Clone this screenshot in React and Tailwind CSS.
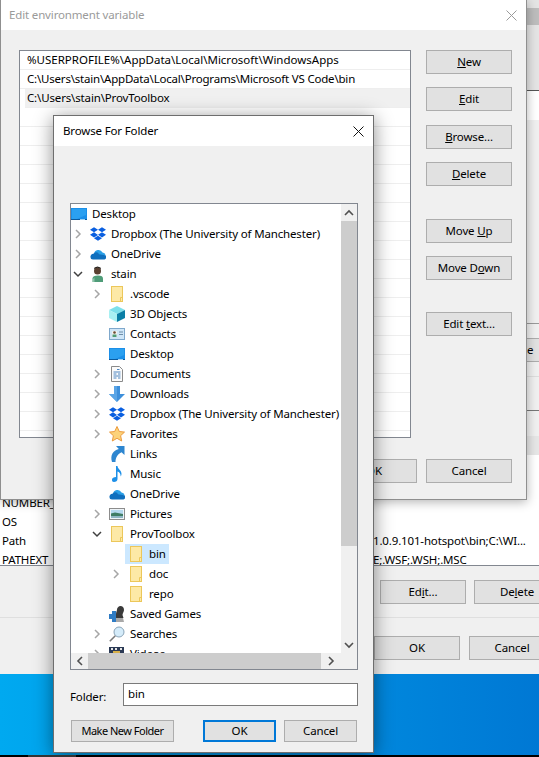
import { FaDropbox } from 'react-icons/fa';

const FolderIcon = () => (
  <svg width="16" height="16" viewBox="0 0 16 16">
    <rect x="2.5" y="0.5" width="11" height="15" fill="#fde9a6" stroke="#ecc75a" />
    <path d="M11.5 15v-3.500h2" fill="none" stroke="#ecc75a" />
  </svg>
);

const DesktopIcon = () => (
  <svg width="16" height="16" viewBox="0 0 16 16">
    <rect x="0" y="2" width="16" height="12" fill="#1b8fe8" />
    <path d="M1 3h14v6L6 13H1z" fill="#2ba0f0" />
    <rect x="0" y="13" width="16" height="1" fill="#0b5a9e" />
    <rect x="9" y="13" width="5" height="1" fill="#9fd3f5" />
  </svg>
);

const DropboxIcon = () => <FaDropbox size={16} color="#0a5fe0" />;

const CloudIcon = () => (
  <svg width="16" height="16" viewBox="0 0 16 16">
    <path d="M4 8a4.500 4.500 0 0 1 8.500-1.500A3 3 0 0 1 15.500 9L6 9z" fill="#2b9fe6" />
    <path d="M0.500 11a2.800 2.800 0 0 1 3-3.200 3 3 0 0 1 5.500 0.500l6.500 1a2.500 2.500 0 0 1-1 4.200H3a2.500 2.500 0 0 1-2.500-2.500z" fill="#0f6fbe" />
  </svg>
);

const UserIcon = () => (
  <svg width="16" height="16" viewBox="0 0 16 16">
    <path d="M2.500 16v-3.500c0-2 2-3 5.500-3s5 1 5 3V16z" fill="#4f9c78" />
    <path d="M3 16v-3l1.500-1.500V16z" fill="#8cc4a8" />
    <circle cx="7.500" cy="5" r="3.500" fill="#5a4030" />
    <path d="M4 3.500Q7.500 0 11 3.500L10.500 1.500 7.500 0.500 4.500 1.500z" fill="#26211c" />
  </svg>
);

const CubeIcon = () => (
  <svg width="16" height="16" viewBox="0 0 16 16">
    <path d="M0 4l8-4 8 4-8 4z" fill="#7de0ea" />
    <path d="M0 4l8 4v8l-8-4z" fill="#a8f0f2" />
    <path d="M16 4l-8 4v8l8-4z" fill="#0b7fa6" />
  </svg>
);

const ContactsIcon = () => (
  <svg width="16" height="16" viewBox="0 0 16 16">
    <rect x="0.500" y="2.500" width="15" height="11" fill="#cfe6f8" stroke="#7fa8cc" />
    <rect x="3" y="5" width="5" height="6" fill="#f2f2ee" />
    <circle cx="5.500" cy="6.500" r="1.300" fill="#6a4a34" />
    <rect x="3.500" y="8.500" width="4" height="2.500" fill="#4f9c78" />
    <path d="M10 6h4M10 8.500h4" stroke="#6f8ea8" />
  </svg>
);

const DocumentIcon = () => (
  <svg width="16" height="16" viewBox="0 0 16 16">
    <path d="M2.500 0.500h8l3 3v12h-11z" fill="#fbfbfb" stroke="#8a8a8a" />
    <path d="M8 3.500h2.500M4.500 6h7M4.500 8h3M9 8h2.500M4.500 10h7M4.500 12h3M9 12h2.500" stroke="#4f86c0" />
  </svg>
);

const DownloadIcon = () => (
  <svg width="16" height="16" viewBox="0 0 16 16">
    <path d="M5 0h6v8h5l-8 8-8-8h5z" fill="#3d8fdb" />
    <path d="M5 0h3v16l-8-8h5z" fill="#5aa5e6" />
  </svg>
);

const StarIcon = () => (
  <svg width="16" height="16" viewBox="0 0 16 16">
    <path d="M8 0.500l2.300 5 5.200 0.600-3.900 3.600 1.100 5.300L8 12.300l-4.700 2.700 1.100-5.300L0.500 6.100l5.200-0.600z" fill="#fcd27a" stroke="#eb9a3e" />
  </svg>
);

const LinkIcon = () => (
  <svg width="16" height="16" viewBox="0 0 16 16">
    <path d="M7 0h8.500v9l-3-2.800C9 8 6.500 11 6.500 16H3C1 9 4 4.500 9.800 3z" fill="#2d86d0" />
  </svg>
);

const MusicIcon = () => (
  <svg width="16" height="16" viewBox="0 0 16 16">
    <path d="M7 0h1.500c0 3 4 4 4 8 0 1-0.300 1.800-0.800 2.500 0-3-1.500-4.500-3.200-5V13c0 1.800-1.600 3-3.500 3S3 15 3 13.500 4.800 11 7 11z" fill="#1e90e8" />
  </svg>
);

const PictureIcon = () => (
  <svg width="16" height="16" viewBox="0 0 16 16">
    <rect x="0.500" y="2.500" width="15" height="11" fill="#eef4f8" stroke="#8c8c8c" />
    <rect x="2" y="4" width="12" height="4" fill="#b4d8ee" />
    <path d="M2 7.500l4-1 8 1.500V12H2z" fill="#3f7c64" />
    <rect x="2" y="10" width="12" height="2" fill="#8fb6c4" />
  </svg>
);

const GamesIcon = () => (
  <svg width="16" height="16" viewBox="0 0 16 16">
    <path d="M0 8h3V5h4v11H3v-3H0z" fill="#2f7cc4" />
    <path d="M7 8c0-2 1-3 1-4.500S9.500 0 11.500 0 15 1.500 15 4c0 2-1.500 3-1.500 5l1 3H7z" fill="#3a3a3a" />
    <path d="M7 12h7l1 4H7z" fill="#a8a8a8" />
  </svg>
);

const SearchIcon = () => (
  <svg width="16" height="16" viewBox="0 0 16 16">
    <circle cx="10" cy="6" r="5" fill="#d5ecfa" stroke="#8aa4b8" />
    <path d="M6.300 9.700L0.800 15.200" stroke="#7a7a7a" strokeWidth="1.600" />
  </svg>
);

const VideoIcon = () => (
  <svg width="16" height="16" viewBox="0 0 16 16">
    <rect x="0" y="1" width="15" height="13" fill="#2b3a55" />
    <rect x="2" y="2" width="2" height="2" fill="#e6e6e6" />
    <rect x="6" y="2" width="2" height="2" fill="#e6e6e6" />
    <rect x="11" y="2" width="2" height="2" fill="#e6e6e6" />
    <rect x="4" y="5" width="7" height="6" fill="#d7b04a" />
  </svg>
);

const Chevron = ({ open }) => (
  <svg width="12" height="12" viewBox="0 0 12 12">
    {open ? (
      <path d="M2 4l4 4 4-4" fill="none" stroke="#404040" strokeWidth="1.500" />
    ) : (
      <path d="M4 2l4 4-4 4" fill="none" stroke="#a6a6a6" strokeWidth="1.500" />
    )}
  </svg>
);

const treeRows = [
  { depth: 0, icon: DesktopIcon, label: 'Desktop' },
  { depth: 1, chevron: 'right', icon: DropboxIcon, label: 'Dropbox (The University of Manchester)' },
  { depth: 1, chevron: 'right', icon: CloudIcon, label: 'OneDrive' },
  { depth: 1, chevron: 'down', icon: UserIcon, label: 'stain' },
  { depth: 2, chevron: 'right', icon: FolderIcon, label: '.vscode' },
  { depth: 2, icon: CubeIcon, label: '3D Objects' },
  { depth: 2, icon: ContactsIcon, label: 'Contacts' },
  { depth: 2, icon: DesktopIcon, label: 'Desktop' },
  { depth: 2, chevron: 'right', icon: DocumentIcon, label: 'Documents' },
  { depth: 2, chevron: 'right', icon: DownloadIcon, label: 'Downloads' },
  { depth: 2, chevron: 'right', icon: DropboxIcon, label: 'Dropbox (The University of Manchester)' },
  { depth: 2, chevron: 'right', icon: StarIcon, label: 'Favorites' },
  { depth: 2, icon: LinkIcon, label: 'Links' },
  { depth: 2, icon: MusicIcon, label: 'Music' },
  { depth: 2, icon: CloudIcon, label: 'OneDrive' },
  { depth: 2, chevron: 'right', icon: PictureIcon, label: 'Pictures' },
  { depth: 2, chevron: 'down', icon: FolderIcon, label: 'ProvToolbox' },
  { depth: 3, icon: FolderIcon, label: 'bin', selected: true },
  { depth: 3, chevron: 'right', icon: FolderIcon, label: 'doc' },
  { depth: 3, icon: FolderIcon, label: 'repo' },
  { depth: 2, icon: GamesIcon, label: 'Saved Games' },
  { depth: 2, chevron: 'right', icon: SearchIcon, label: 'Searches' },
  { depth: 2, chevron: 'right', icon: VideoIcon, label: 'Videos' },
];

const depthPad = ['pl-0', 'pl-0', 'pl-[19px]', 'pl-[38px]'];

function TreeRow({ depth, chevron, icon: Icon, label, selected }) {
  return (
    <div className={`flex h-5 shrink-0 items-center whitespace-nowrap ${depthPad[depth]}`}>
      {depth > 0 && (
        <span className="flex w-4 shrink-0 items-center justify-center pr-[2px]">
          {chevron && <Chevron open={chevron === 'down'} />}
        </span>
      )}
      <span className={`flex h-5 items-center gap-[5px] pr-[3px] ${depth > 0 ? 'pl-[3px]' : ''} ${selected ? 'bg-[#cce8ff]' : ''}`}>
        <Icon />
        <span>{label}</span>
      </span>
    </div>
  );
}

function Btn({ children, className = '' }) {
  return (
    <button className={`flex h-6 items-center justify-center border border-[#adadad] bg-[#e1e1e1] text-black ${className}`}>
      <span>{children}</span>
    </button>
  );
}

function XIcon({ color }) {
  return (
    <svg width="11" height="11" viewBox="0 0 11 11">
      <path d="M0.500 0.500l10 10M10.500 0.500l-10 10" stroke={color} />
    </svg>
  );
}

function ScrollArrow({ d }) {
  return (
    <svg width="10" height="10" viewBox="0 0 10 10">
      <path d={d} fill="none" stroke="#505050" strokeWidth="1.600" />
    </svg>
  );
}

const pathRows = [
  '%USERPROFILE%\\AppData\\Local\\Microsoft\\WindowsApps',
  'C:\\Users\\stain\\AppData\\Local\\Programs\\Microsoft VS Code\\bin',
  'C:\\Users\\stain\\ProvToolbox',
  '', '', '', '', '', '', '', '', '', '', '', '', '', '', '', '', '',
];

const pathRowTracking = ['tracking-normal', 'tracking-[-0.2px]', 'tracking-[-0.15px]'];

const editButtons = [
  { text: <><u>N</u>ew</>, cls: 'mb-[13px]' },
  { text: <><u>E</u>dit</>, cls: 'mb-[14px]' },
  { text: <><u>B</u>rowse...</>, cls: 'mb-[13px]' },
  { text: <><u>D</u>elete</>, cls: 'mb-[33px]' },
  { text: <>Move <u>U</u>p</>, cls: 'mb-[13px]' },
  { text: <>Move D<u>o</u>wn</>, cls: 'mb-[32px]' },
  { text: <>Edit <u>t</u>ext...</>, cls: '' },
];

const sysVars = [
  ['NUMBER_', ''],
  ['OS', ''],
  ['Path', '1.0.9.101-hotspot\\bin;C:\\WI...'],
  ['PATHEXT', 'E;.WSF;.WSH;.MSC'],
];

export default function App() {
  return (
    <div className="relative h-[757px] w-[539px] overflow-hidden bg-gradient-to-r from-[#00a9f0] to-[#0078d4] font-['Noto_Sans','Open_Sans',sans-serif] text-[11.5px] leading-4 tracking-[-0.15px] text-black">
      {/* environment variables window, mostly covered */}
      <div className="absolute inset-x-0 top-0 flex h-[674px] flex-col bg-[#f0f0f0]">
        <div className="flex h-[90px] shrink-0 justify-end bg-[#e4e4e4]">
          <div className="flex w-[13px] flex-col border-l border-[#c8c8c8]">
            <div className="mt-2 h-[17px] bg-[#bdbdbd]" />
          </div>
        </div>
        <div className="h-px shrink-0 bg-[#555555]" />
        <div className="h-[29px] shrink-0 bg-white" />
        <div className="flex h-[316px] shrink-0 flex-col items-end bg-[#f0f0f0] pt-[203px]">
          <div className="h-px w-[13px] bg-[#9a9a9a]" />
          <div className="mt-[14px] flex h-6 w-[13px] items-center border-y border-[#adadad] bg-[#e1e1e1] pl-[1px]">e</div>
          <div className="mt-[14px] h-px w-[13px] bg-[#dddddd]" />
          <div className="mt-[33px] h-px w-[13px] bg-[#777777]" />
        </div>
        <div className="h-[19px] shrink-0 bg-[#e6e6e6]" />
        <div className="h-[38px] shrink-0 bg-white" />
        <div className="flex h-[73px] shrink-0 border-b border-[#828790] bg-white">
          <div className="flex w-[373px] flex-col overflow-hidden pl-[2px]">
            {sysVars.map(([name]) => (
              <div key={name} className="flex h-[19px] shrink-0 items-center">{name}</div>
            ))}
          </div>
          <div className="flex flex-col overflow-hidden">
            {sysVars.map(([name, value]) => (
              <div key={name} className="flex h-[19px] shrink-0 items-center whitespace-nowrap">{value}</div>
            ))}
          </div>
        </div>
        <div className="flex gap-2 pl-[380px] pt-[14px]">
          <Btn className="w-[86px] shrink-0">Ed<u>i</u>t...</Btn>
          <Btn className="w-[86px] shrink-0">De<u>l</u>ete</Btn>
        </div>
        <div className="mt-[13px] h-px bg-[#dfdfdf]" />
        <div className="flex gap-[9px] pl-[374px] pt-[18px]">
          <Btn className="w-[86px] shrink-0">OK</Btn>
          <Btn className="w-[86px] shrink-0">Cancel</Btn>
        </div>
      </div>

      {/* Edit environment variable */}
      <div className="absolute left-0 top-0 flex h-[500px] w-[527px] flex-col border-x border-b border-[#8f8f8f] bg-[#f0f0f0] shadow-[0_2px_10px_rgba(0,0,0,0.3)]">
        <div className="flex h-[30px] shrink-0 items-center justify-between bg-white pl-[8px] pr-[9px] text-[#9a9a9a]">
          <span>Edit environment variable</span>
          <XIcon color="#9a9a9a" />
        </div>
        <div className="flex pl-[18px] pt-[20px]">
          <div className="h-[388px] w-[392px] overflow-hidden border border-[#828790] bg-white">
            {pathRows.map((row, i) => (
              <div key={i} className={`flex h-[19px] items-center border-b border-[#eeeeee] ${pathRowTracking[i] || ''} ${i === 2 ? 'ml-[5px] bg-[#f0f0f0] pl-[2px]' : 'pl-[7px]'}`}>
                {row}
              </div>
            ))}
          </div>
          <div className="ml-[15px] flex w-[86px] flex-col">
            {editButtons.map((b, i) => (
              <Btn key={i} className={`w-full ${b.cls}`}>{b.text}</Btn>
            ))}
          </div>
        </div>
        <div className="flex justify-end gap-[9px] pr-[14px] pt-[21px]">
          <Btn className="w-[86px]">OK</Btn>
          <Btn className="w-[86px]">Cancel</Btn>
        </div>
      </div>

      {/* Browse For Folder */}
      <div className="absolute left-[53px] top-[115px] flex h-[638px] w-[321px] flex-col border border-[#6e6e6e] bg-[#f0f0f0] shadow-[0_3px_18px_rgba(0,0,0,0.45)]">
        <div className="flex h-[30px] shrink-0 items-center justify-between bg-white pl-[9px] pr-[9px]">
          <span>Browse For Folder</span>
          <XIcon color="#111111" />
        </div>
        <div className="flex pl-[16px] pr-[15px] pt-[57px]">
          <div className="flex h-[467px] w-[288px] flex-col border border-[#828790] bg-white">
            <div className="flex min-h-0 flex-1">
              <div className="flex w-[270px] flex-col overflow-hidden">
                {treeRows.map((row, i) => (
                  <TreeRow key={i} {...row} />
                ))}
              </div>
              <div className="flex w-[16px] flex-col bg-[#f0f0f0]">
                <div className="flex h-[17px] items-center justify-center"><ScrollArrow d="M1 7l4-4 4 4" /></div>
                <div className="h-[325px] bg-[#cdcdcd]" />
                <div className="flex-1" />
                <div className="flex h-[17px] items-center justify-center"><ScrollArrow d="M1 3l4 4 4-4" /></div>
              </div>
            </div>
            <div className="flex h-[16px] shrink-0">
              <div className="flex w-[270px] items-center bg-[#f0f0f0]">
                <div className="flex w-[17px] items-center justify-center"><ScrollArrow d="M7 1L3 5l4 4" /></div>
                <div className="h-full w-[233px] bg-[#cdcdcd]" />
                <div className="flex w-[20px] items-center justify-center"><ScrollArrow d="M3 1l4 4-4 4" /></div>
              </div>
              <div className="flex-1 bg-[#f0f0f0]" />
            </div>
          </div>
        </div>
        <div className="flex items-center pl-[16px] pr-[15px] pt-[13px]">
          <span className="w-[53px] pt-[5px]">Folder:</span>
          <div className="flex h-[23px] w-[235px] items-start border border-[#7a7a7a] bg-white pl-[4px] pt-[2px]">bin</div>
        </div>
        <div className="flex items-center pl-[17px] pt-[14px]">
          <Btn className="h-[22px] w-[103px] text-[11px] tracking-[-0.5px]">Make New Folder</Btn>
          <button className="ml-[29px] flex h-[22px] w-[73px] items-center justify-center border-2 border-[#0078d7] bg-[#e1e1e1]">OK</button>
          <Btn className="ml-[8px] h-[22px] w-[73px]">Cancel</Btn>
        </div>
      </div>

      {/* taskbar sliver */}
      <div className="absolute inset-x-0 bottom-0 flex h-[2px] bg-black">
        <div className="ml-[28px] w-[48px] bg-[#333333]" />
      </div>
    </div>
  );
}
